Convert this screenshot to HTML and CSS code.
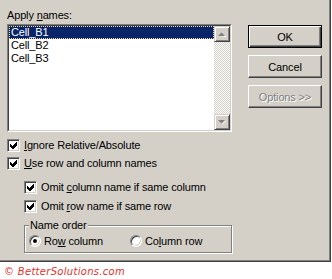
FILE: index.html
```html
<!DOCTYPE html>
<html lang="en">
  <head>
    <meta charset="UTF-8" />
    <title>Apply Names</title>
    <link rel="stylesheet" href="styles.css">
  </head>
  <body>
    <div class="dialog">
      <div class="main">
        <div class="label">Apply <u>n</u>ames:</div>
        <div class="listbox">
          <div class="listbox-inner">
            <ul class="items">
              <li class="item selected">Cell_B1</li>
              <li class="item">Cell_B2</li>
              <li class="item">Cell_B3</li>
            </ul>
            <div class="scrollbar">
              <div class="scroll-btn">
                <svg width="8" height="5" viewBox="0 0 8 5"><path d="M1 5 L8 5 L8 4 Z" fill="#fff"/><path d="M0 4 L3.5 0.5 L7 4 Z" fill="#808080"/></svg>
              </div>
              <div class="track"></div>
              <div class="scroll-btn">
                <svg width="8" height="5" viewBox="0 0 8 5"><path d="M0 0 L7 0 L3.5 3.5 Z" fill="#808080"/><path d="M7 1 L8 1 L4.5 4.5 L4 4 Z" fill="#fff"/></svg>
              </div>
            </div>
          </div>
        </div>

        <!-- checkbox rows -->
        <div class="check row1">
          <span class="box"><svg width="7" height="7" viewBox="0 0 7 7" shape-rendering="crispEdges"><path d="M0 2 L2 4 L6 0 L7 0 L7 3 L3 7 L2 7 L0 5 Z" fill="#000"/></svg></span>
          <span><u>I</u>gnore Relative/Absolute</span>
        </div>
        <div class="check row2">
          <span class="box"><svg width="7" height="7" viewBox="0 0 7 7" shape-rendering="crispEdges"><path d="M0 2 L2 4 L6 0 L7 0 L7 3 L3 7 L2 7 L0 5 Z" fill="#000"/></svg></span>
          <span><u>U</u>se row and column names</span>
        </div>
        <div class="check sub row3">
          <span class="box"><svg width="7" height="7" viewBox="0 0 7 7" shape-rendering="crispEdges"><path d="M0 2 L2 4 L6 0 L7 0 L7 3 L3 7 L2 7 L0 5 Z" fill="#000"/></svg></span>
          <span>Omit <u>c</u>olumn name if same column</span>
        </div>
        <div class="check sub row4">
          <span class="box"><svg width="7" height="7" viewBox="0 0 7 7" shape-rendering="crispEdges"><path d="M0 2 L2 4 L6 0 L7 0 L7 3 L3 7 L2 7 L0 5 Z" fill="#000"/></svg></span>
          <span>Omit <u>r</u>ow name if same row</span>
        </div>

        <div class="group">
          <div class="legend">Name order</div>
          <div class="radios">
            <div class="radio-opt first">
              <span class="radio on"></span>
              <span>Ro<u>w</u> column</span>
            </div>
            <div class="radio-opt">
              <span class="radio"></span>
              <span>Co<u>l</u>umn row</span>
            </div>
          </div>
        </div>
      </div>

      <div class="side">
        <div class="btn default">OK</div>
        <div class="btn">Cancel</div>
        <div class="btn disabled">Options &gt;&gt;</div>
      </div>
    </div>
    <div class="copyright">&copy; BetterSolutions.com</div>
  </body>
</html>
```

FILE: styles.css
```css
* {
  margin: 0;
  padding: 0;
}
body {
  background: #fff;
  font-family: "Liberation Sans", Arial, sans-serif;
  font-size: 11px;
  letter-spacing: -0.15px;
  color: #000;
}
ul,
li {
  list-style: none;
}
u {
  text-decoration: underline;
  text-underline-offset: 1px;
}

/* dialog frame */
.dialog {
  display: flex;
  width: 331px;
  height: 262px;
  box-sizing: border-box;
  padding: 8px 0 0 7px;
  background: #d4d0c8;
  border-right: 1px solid #404040;
  border-bottom: 1px solid #404040;
  box-shadow: inset -1px -1px 0 #808080;
}
.main {
  width: 226px;
}
.label {
  height: 14px;
  line-height: 14px;
  margin-bottom: 2px;
}

/* list box */
.listbox {
  width: 225px;
  height: 108px;
  box-sizing: border-box;
  border: 1px solid;
  border-color: #808080 #fff #fff #808080;
  margin-bottom: 7px;
}
.listbox-inner {
  display: flex;
  height: 100%;
  box-sizing: border-box;
  border: 1px solid;
  border-color: #404040 #d4d0c8 #d4d0c8 #404040;
  background: #fff;
}
.items {
  flex: 1;
}
.item {
  height: 13px;
  line-height: 13px;
  padding-left: 2px;
}
.item.selected {
  background: #0a246a;
  color: #fff;
  outline: 1px dotted #f5db95;
  outline-offset: -1px;
}
.scrollbar {
  display: flex;
  flex-direction: column;
  width: 16px;
}
.track {
  flex: 1;
  background: repeating-conic-gradient(#fff 0 25%, #d4d0c8 0 50%) 0 0 / 2px 2px;
}
.scroll-btn {
  display: flex;
  align-items: center;
  justify-content: center;
  height: 16px;
  box-sizing: border-box;
  background: #d4d0c8;
  border: 1px solid;
  border-color: #d4d0c8 #404040 #404040 #d4d0c8;
  box-shadow: inset 1px 1px 0 #fff, inset -1px -1px 0 #808080;
}

/* checkboxes */
.check {
  display: flex;
  align-items: center;
  gap: 4px;
  height: 13px;
  line-height: 13px;
}
.check.sub {
  margin-left: 17px;
}
.row2 {
  margin-top: 5px;
}
.row3 {
  margin-top: 11px;
}
.row4 {
  margin-top: 6px;
}
.box {
  display: flex;
  align-items: center;
  justify-content: center;
  width: 13px;
  height: 13px;
  box-sizing: border-box;
  background: #fff;
  border: 1px solid;
  border-color: #808080 #fff #fff #808080;
  box-shadow: inset 1px 1px 0 #404040, inset -1px -1px 0 #d4d0c8;
}

/* name order group */
.group {
  width: 208px;
  height: 28px;
  box-sizing: border-box;
  margin: 12px 0 0 17px;
  border: 1px solid #808080;
  box-shadow: 1px 1px 0 #fff, inset 1px 1px 0 #fff;
}
.legend {
  width: fit-content;
  margin: -7px 0 0 4px;
  padding: 0 1px;
  line-height: 13px;
  background: #d4d0c8;
}
.radios {
  display: flex;
  margin-top: 3px;
  padding-left: 4px;
}
.radio-opt {
  display: flex;
  align-items: center;
  gap: 3px;
  height: 12px;
  line-height: 12px;
}
.radio-opt.first {
  width: 101px;
}
.radio {
  display: flex;
  align-items: center;
  justify-content: center;
  width: 12px;
  height: 12px;
  box-sizing: border-box;
  border-radius: 50%;
  background: #fff;
  border: 1px solid;
  border-color: #808080 #fff #fff #808080;
  box-shadow: inset 1px 1px 0 #404040, inset -1px -1px 0 #d4d0c8;
}
.radio.on::after {
  content: "";
  width: 4px;
  height: 4px;
  border-radius: 50%;
  background: #000;
}

/* buttons */
.side {
  display: flex;
  flex-direction: column;
  gap: 7px;
  margin: 17px 0 0 15px;
}
.btn {
  display: flex;
  align-items: center;
  justify-content: center;
  width: 74px;
  height: 23px;
  box-sizing: border-box;
  background: #d4d0c8;
  border: 1px solid;
  border-color: #fff #404040 #404040 #fff;
  box-shadow: inset -1px -1px 0 #808080;
}
.btn.default {
  border-color: #000;
  box-shadow: inset 1px 1px 0 #fff, inset -1px -1px 0 #404040, inset -2px -2px 0 #808080;
}
.btn.disabled {
  color: #808080;
  text-shadow: 1px 1px 0 #fff;
}

.copyright {
  margin-top: 3px;
  padding-left: 4px;
  font-family: "DejaVu Sans", Verdana, sans-serif;
  font-size: 10px;
  font-style: italic;
  letter-spacing: 0.3px;
  line-height: 14px;
  color: #e8302c;
}
```
